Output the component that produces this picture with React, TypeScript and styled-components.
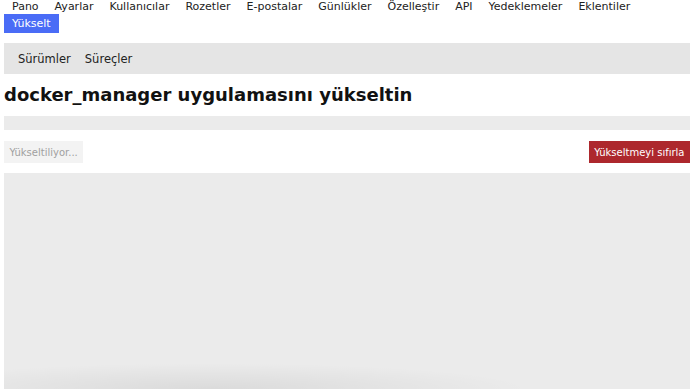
import styled, { createGlobalStyle } from "styled-components";

const GlobalStyle = createGlobalStyle`
  html, body {
    margin: 0;
    padding: 0;
    overflow: hidden;
  }
  body {
    padding-left: 4px;
    font-family: "DejaVu Sans", "Open Sans", sans-serif;
    color: #222;
    background: #fff;
  }
`;

const Page = styled.div`
  display: flex;
  flex-direction: column;
`;

const AdminNav = styled.ul`
  display: flex;
  flex-wrap: wrap;
  list-style: none;
  margin: -1px 0 0 0;
  padding: 0;
`;

const NavItem = styled.li<{ $active?: boolean }>`
  padding: ${(p) => (p.$active ? "2px 8px 2px" : "0 8px")};
  font-size: 11px;
  line-height: 15px;
  white-space: nowrap;
  color: ${(p) => (p.$active ? "#fff" : "#222")};
  background: ${(p) => (p.$active ? "#4a6cf6" : "transparent")};
`;

const RowBreak = styled.li`
  flex-basis: 100%;
  height: 0;
`;

const SubNav = styled.ul`
  display: flex;
  align-items: center;
  list-style: none;
  margin: 10px 0 0 0;
  padding: 0 7px;
  height: 31px;
  background: #e5e5e5;
`;

const SubNavItem = styled.li`
  padding: 0 7px;
  font-size: 11.5px;
  color: #222;
`;

const Title = styled.h1`
  margin: 9px 0 0 0;
  font-size: 18px;
  line-height: 24px;
  font-weight: bold;
  color: #111;
`;

const Progress = styled.div`
  margin-top: 9px;
  height: 14px;
  background: #ebebeb;
`;

const Actions = styled.div`
  display: flex;
  justify-content: space-between;
  align-items: center;
  margin-top: 11px;
`;

const Button = styled.button<{ $danger?: boolean }>`
  height: 22px;
  padding: 0 5.5px;
  border: none;
  font-family: inherit;
  font-size: 10px;
  color: ${(p) => (p.$danger ? "#fff" : "#a0a0a0")};
  background: ${(p) => (p.$danger ? "#ad282d" : "#f3f3f3")};
`;

const Log = styled.div`
  margin-top: 10px;
  height: 216px;
  background:
    radial-gradient(ellipse 320px 26px at 30% 100%, rgba(0, 0, 0, 0.07), transparent),
    #ebebeb;
`;

export default function App() {
  const tabs = [
    "Pano",
    "Ayarlar",
    "Kullanıcılar",
    "Rozetler",
    "E-postalar",
    "Günlükler",
    "Özelleştir",
    "API",
    "Yedeklemeler",
    "Eklentiler",
  ];
  return (
    <Page>
      <GlobalStyle />
      <AdminNav>
        {tabs.map((t) => (
          <NavItem key={t}>{t}</NavItem>
        ))}
        <RowBreak />
        <NavItem $active>Yükselt</NavItem>
      </AdminNav>
      <SubNav>
        <SubNavItem>Sürümler</SubNavItem>
        <SubNavItem>Süreçler</SubNavItem>
      </SubNav>
      <Title>docker_manager uygulamasını yükseltin</Title>
      <Progress />
      <Actions>
        <Button>Yükseltiliyor...</Button>
        <Button $danger>Yükseltmeyi sıfırla</Button>
      </Actions>
      <Log />
    </Page>
  );
}
